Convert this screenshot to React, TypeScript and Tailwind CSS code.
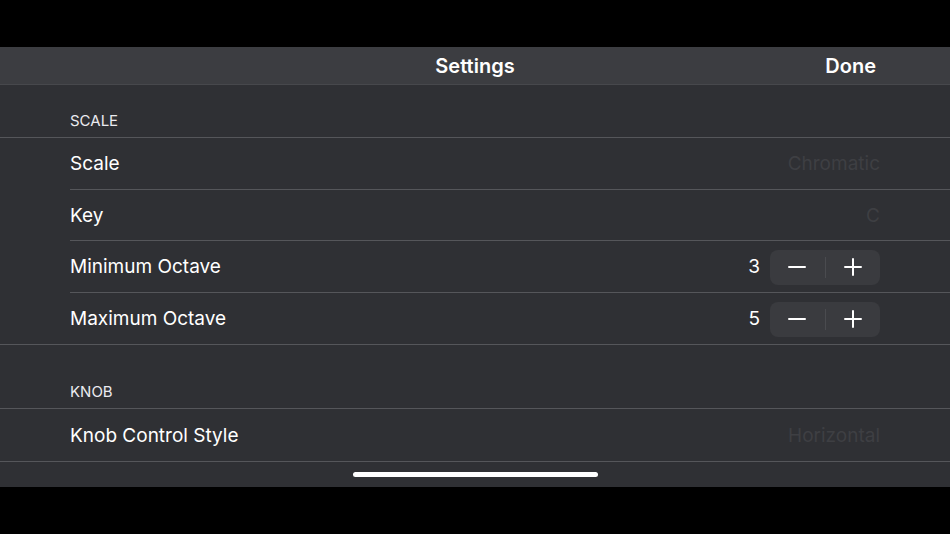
const font = { fontFamily: "Inter, 'Noto Sans', sans-serif" };

function MinusIcon() {
  return (
    <svg width="18" height="18" viewBox="0 0 18 18" fill="none" stroke="white" strokeWidth="2" strokeLinecap="round">
      <path d="M1 9h16" />
    </svg>
  );
}

function PlusIcon() {
  return (
    <svg width="18" height="18" viewBox="0 0 18 18" fill="none" stroke="white" strokeWidth="2" strokeLinecap="round">
      <path d="M1 9h16M9 1v16" />
    </svg>
  );
}

function Stepper({ value }: { value: number }) {
  return (
    <div className="flex items-center gap-[10px]">
      <span className="text-[19px] text-white">{value}</span>
      <div className="flex h-[35px] w-[110px] items-center rounded-[8px] bg-[#3a3b3f]">
        <div className="flex flex-1 items-center justify-center">
          <MinusIcon />
        </div>
        <div className="h-[21px] w-px bg-[#4a4b4f]" />
        <div className="flex flex-1 items-center justify-center">
          <PlusIcon />
        </div>
      </div>
    </div>
  );
}

function Row({ label, value, stepper, last }: { label: string; value?: string; stepper?: number; last?: boolean }) {
  return (
    <div className="pl-[70px]">
      <div
        className={`flex h-[51.5px] items-center justify-between pr-[70px] pt-[2px] ${last ? "" : "border-b border-[#55565a]"}`}
      >
        <span className="text-[19px] text-white">{label}</span>
        {stepper !== undefined ? (
          <Stepper value={stepper} />
        ) : (
          <span className="text-[19px] text-[#3e3f43]">{value}</span>
        )}
      </div>
    </div>
  );
}

function Header({ title, height }: { title: string; height: string }) {
  return (
    <div className={`flex items-end pb-[5px] pl-[70px] ${height}`}>
      <span className="text-[15px] uppercase text-[#ebebf0]">{title}</span>
    </div>
  );
}

export default function App() {
  return (
    <div className="flex h-[534px] w-[950px] flex-col overflow-hidden bg-black" style={font}>
      <div className="h-[47px]" />
      <div className="relative h-[440px] overflow-hidden bg-[#2f3034]">
        <div className="relative flex h-[38px] items-center justify-center border-b border-[#47484c] bg-[#3c3d41]">
          <span className="text-[20px] font-semibold text-white">Settings</span>
          <span className="absolute right-[74px] text-[20px] font-semibold text-white">Done</span>
        </div>

        <Header title="Scale" height="h-[52px]" />
        <div className="border-y border-[#55565a]">
          <Row label="Scale" value="Chromatic" />
          <Row label="Key" value="C" />
          <Row label="Minimum Octave" stepper={3} />
          <Row label="Maximum Octave" stepper={5} last />
        </div>

        <Header title="Knob" height="h-[63px]" />
        <div className="border-y border-[#55565a]">
          <Row label="Knob Control Style" value="Horizontal" last />
        </div>

        <div className="absolute bottom-[10px] left-[353px] h-[5px] w-[245px] rounded-full bg-white" />
      </div>
      <div className="flex-1" />
    </div>
  );
}
